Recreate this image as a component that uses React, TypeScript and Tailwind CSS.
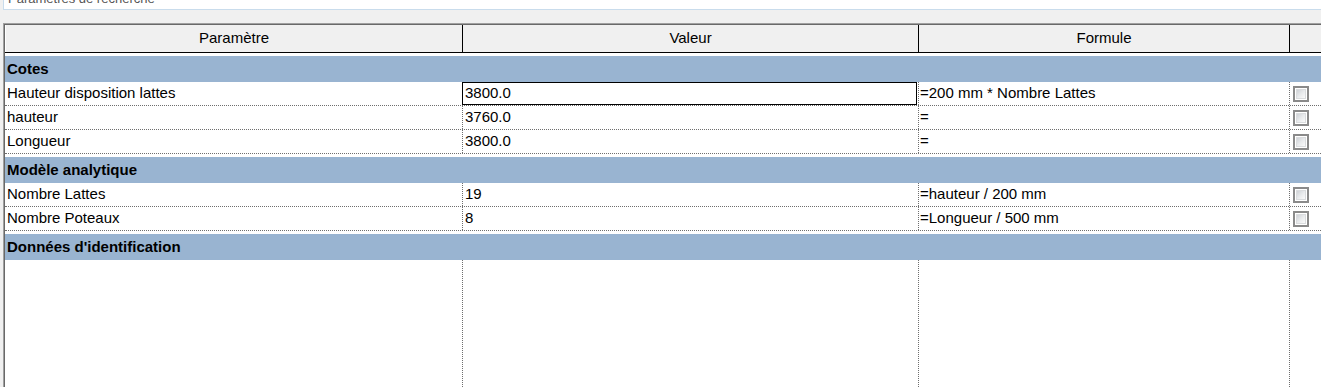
import React from "react";

type Row = { name: string; value: string; formula: string; selected?: boolean };
type Group = { title: string; rows: Row[] };

const groups: Group[] = [
  {
    title: "Cotes",
    rows: [
      { name: "Hauteur disposition lattes", value: "3800.0", formula: "=200 mm * Nombre Lattes", selected: true },
      { name: "hauteur", value: "3760.0", formula: "=" },
      { name: "Longueur", value: "3800.0", formula: "=" },
    ],
  },
  {
    title: "Modèle analytique",
    rows: [
      { name: "Nombre Lattes", value: "19", formula: "=hauteur / 200 mm" },
      { name: "Nombre Poteaux", value: "8", formula: "=Longueur / 500 mm" },
    ],
  },
  { title: "Données d'identification", rows: [] },
];

const CheckBox = () => (
  <div className="w-[16px] h-[16px] border-2 border-[#8a8a8a] bg-white p-[1px]">
    <div className="w-full h-full bg-gradient-to-br from-[#cfd2d6] via-[#e8eaec] to-[#fafafa] border border-[#dadcde]" />
  </div>
);

const DataRow = ({ row }: { row: Row }) => (
  <div className="flex h-[24px] border-b border-dotted border-[#6e6e6e]">
    <div className="w-[458px] shrink-0 flex items-center pl-[2px] border-r border-dotted border-[#6e6e6e]">
      {row.name}
    </div>
    <div className="relative w-[456px] shrink-0 flex items-center pl-[2px] border-r border-dotted border-[#6e6e6e]">
      {row.selected && (
        <div className="absolute -left-px top-0 bottom-0 right-[1px] border border-black" />
      )}
      <span className="relative">{row.value}</span>
    </div>
    <div className="w-[371px] shrink-0 flex items-center pl-[1px] border-r border-dotted border-[#6e6e6e]">
      {row.formula}
    </div>
    <div className="flex-1 flex items-center pl-[3px]">
      <CheckBox />
    </div>
  </div>
);

export default function App() {
  return (
    <div
      className="w-[1321px] h-[387px] overflow-hidden bg-[#f0f0f0] flex flex-col text-[15px] text-black"
      style={{ fontFamily: '"Liberation Sans", Arial, sans-serif' }}
    >
      {/* search box, mostly scrolled out of view */}
      <div className="ml-[3px] h-[10px] shrink-0 bg-white border-l border-b border-[#c9dcec] overflow-hidden">
        <div className="mt-[-8px] pl-[4px] text-[13px] leading-[13px] text-[#555]">Paramètres de recherche</div>
      </div>

      <div className="mt-[13px] ml-[3px] flex-1 flex flex-col border-t border-l border-[#a0a0a0]">
        <div className="flex-1 flex flex-col border-t border-l border-[#696969]">
          {/* header */}
          <div className="flex h-[28px] shrink-0 border-b border-black bg-[#f0f0f0]">
            <div className="w-[458px] shrink-0 flex items-center justify-center border-r border-l border-black border-l-white">
              Paramètre
            </div>
            <div className="w-[456px] shrink-0 flex items-center justify-center border-r border-black">Valeur</div>
            <div className="w-[371px] shrink-0 flex items-center justify-center border-r border-black">Formule</div>
            <div className="flex-1" />
          </div>

          <div className="flex-1 flex flex-col bg-white">
            {groups.map((g) => (
              <div key={g.title}>
                <div className="pt-[3px]">
                  <div className="h-[26px] bg-[#99b4d1] flex items-center pl-[2px] font-bold">{g.title}</div>
                </div>
                {g.rows.map((r) => (
                  <DataRow key={r.name} row={r} />
                ))}
              </div>
            ))}
            {/* empty area */}
            <div className="flex-1 flex">
              <div className="w-[458px] shrink-0 border-r border-dotted border-[#6e6e6e]" />
              <div className="w-[456px] shrink-0 border-r border-dotted border-[#6e6e6e]" />
              <div className="w-[371px] shrink-0 border-r border-dotted border-[#6e6e6e]" />
              <div className="flex-1" />
            </div>
          </div>
        </div>
      </div>
    </div>
  );
}
